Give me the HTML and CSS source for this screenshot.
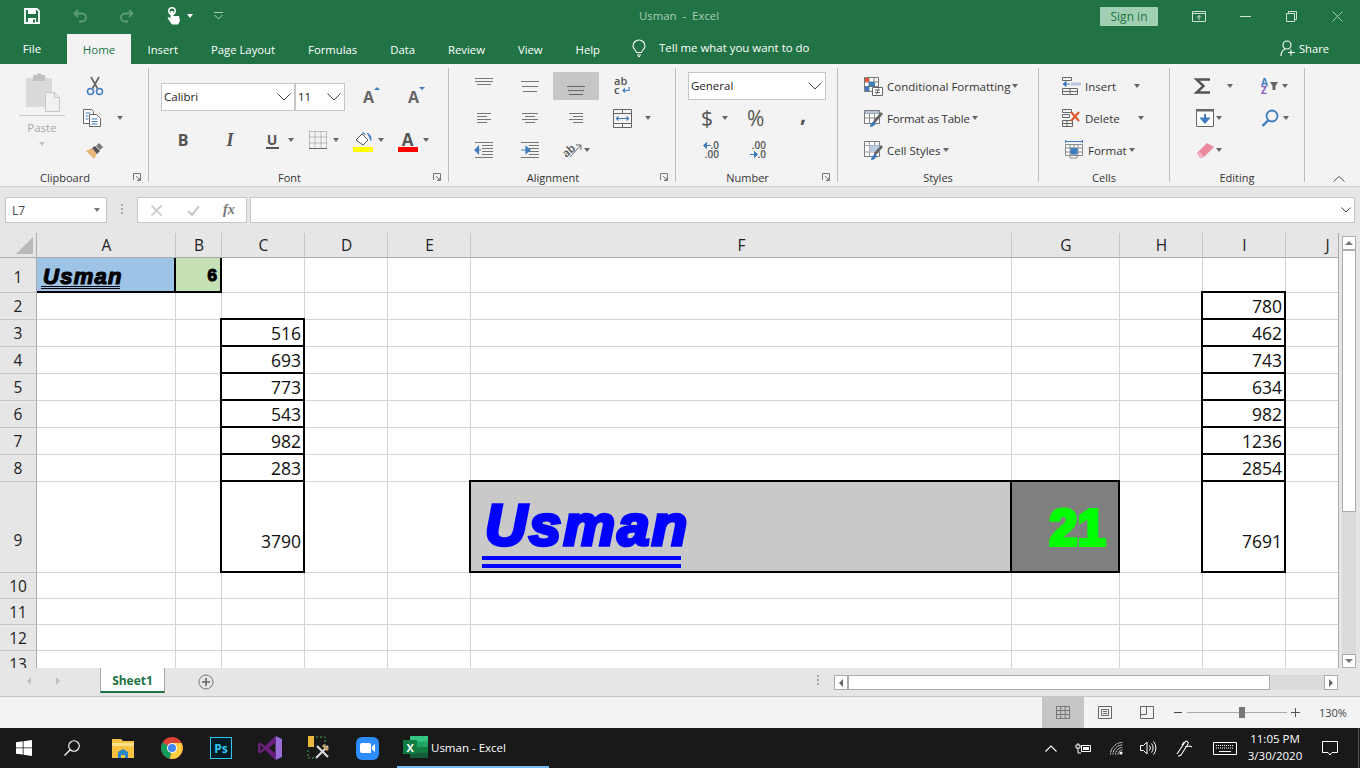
FILE: index.html
```html
<!DOCTYPE html>
<html lang="en">
<head>
<meta charset="utf-8">
<title>Usman - Excel</title>
<link rel="stylesheet" href="styles.css">
</head>
<body>
<div class="app">
  <header class="titlebar">
    <div class="qat">
      <svg class="q-save" width="16" height="16" viewBox="0 0 16 16"><path d="M1 1h12l2 2v12H1z" fill="none" stroke="#fff" stroke-width="1.8"/><path d="M4 1h8v5H4z" fill="#fff"/><path d="M4 10h8v5H4z" fill="#fff"/><path d="M9 11.500h2v3H9z" fill="#217346"/></svg>
      <svg class="q-undo" width="15" height="14" viewBox="0 0 15 14"><path d="M5 1L1.500 4.500 5 8M2 4.500h7a4 4 0 0 1 0 8H6" fill="none" stroke="#5f9b78" stroke-width="1.8"/></svg>
      <svg class="q-redo" width="15" height="14" viewBox="0 0 15 14"><path d="M10 1l3.500 3.500L10 8M13 4.500H6a4 4 0 0 0 0 8h3" fill="none" stroke="#5f9b78" stroke-width="1.800"/></svg>
      <svg class="q-touch" width="16" height="18" viewBox="0 0 16 18"><circle cx="6" cy="4" r="3.200" fill="none" stroke="#fff" stroke-width="1.500"/><path d="M4.500 4h3v5h5.500l1 5-2 3.500H6L1.500 11l1-1 2 1.500z" fill="#fff"/></svg>
      <span class="caret wh q-c1"></span>
      <svg class="q-more" width="9" height="8" viewBox="0 0 9 8"><path d="M0 .5h9" stroke="#a9cdb8"/><path d="M.5 3l4 4 4-4" fill="none" stroke="#a9cdb8"/></svg>
    </div>
    <div class="doc-title">Usman&nbsp; - &nbsp;Excel</div>
    <div class="win">
      <button class="signin">Sign in</button>
      <svg class="w1" width="14" height="11" viewBox="0 0 14 11"><path d="M.5.5h13v10H.5zM.5 2.500h13M7 9V4.500M5 6.500l2-2 2 2" fill="none" stroke="#cfe3d7"/></svg>
      <svg class="w2" width="11" height="1" viewBox="0 0 11 1"><path d="M0 .5h11" stroke="#cfe3d7"/></svg>
      <svg class="w3" width="11" height="11" viewBox="0 0 11 11"><path d="M.5 2.500h8v8h-8zM2.500 2.500v-2h8v8h-2" fill="none" stroke="#cfe3d7"/></svg>
      <svg class="w4" width="11" height="11" viewBox="0 0 11 11"><path d="M.5.5l10 10M10.500.5l-10 10" stroke="#9fc6ae" stroke-width="1"/></svg>
    </div>
  </header>

  <nav class="tabs">
    <a class="tab file">File</a>
    <a class="tab active">Home</a>
    <a class="tab">Insert</a>
    <a class="tab">Page Layout</a>
    <a class="tab">Formulas</a>
    <a class="tab">Data</a>
    <a class="tab">Review</a>
    <a class="tab">View</a>
    <a class="tab">Help</a>
    <svg class="bulb" width="14" height="17" viewBox="0 0 14 17"><path d="M4.500 12.500C4 10 1 9 1 6a6 6 0 0 1 12 0c0 3-3 4-3.500 6.500zM5 15h4M6 16.500h2" fill="none" stroke="#fff" stroke-width="1.100"/></svg>
    <span class="tell">Tell me what you want to do</span>
    <span class="share"><svg width="16" height="17" viewBox="0 0 16 17"><circle cx="7" cy="5" r="4" fill="none" stroke="#fff" stroke-width="1.100"/><path d="M1 16c0-4 2-6 4-7M9 10.500M11 9.500v6M8 12.500h7" fill="none" stroke="#fff" stroke-width="1.100"/></svg>Share</span>
  </nav>

  <section class="ribbon">
    <div class="grp g-clip">
      <div class="body clip-body">
        <div class="paste">
          <svg class="paste-ico" width="36" height="39" viewBox="0 0 36 39"><path d="M1 5h26v29H1z" fill="#dcd9dc"/><path d="M8 2h12v6H8z" fill="#c2bfc2"/><circle cx="14" cy="2.500" r="2.500" fill="#c2bfc2"/><path d="M20.500 19.500h9l5 5v14h-14z" fill="#f3f0f3" stroke="#c8c5c8"/><path d="M29.500 19.500v5h5" fill="none" stroke="#c8c5c8"/></svg>
          <span class="paste-line"></span>
          <span class="paste-txt">Paste</span>
          <span class="caret dis"></span>
        </div>
        <div class="clip-tools">
          <div class="row32"><svg class="ml-cut" width="18" height="20" viewBox="0 0 18 20"><path d="M5 1l6.500 11.500M13 1L6.500 12.500" stroke="#666" stroke-width="1.700" fill="none"/><circle cx="4.500" cy="15.500" r="3" fill="none" stroke="#3f7cbf" stroke-width="1.500"/><circle cx="13.500" cy="15.500" r="3" fill="none" stroke="#3f7cbf" stroke-width="1.500"/></svg></div>
          <div class="row32"><svg class="ml-copy" width="18" height="18" viewBox="0 0 18 18"><path d="M.5.5h8l2 2v12H.5z" fill="#fff" stroke="#666"/><path d="M6.500 5.500h7l4 4v8h-11z" fill="#fff" stroke="#666"/><path d="M2.500 4h5M2.500 7h3M2.500 10h3M8.500 10h6M8.500 12.500h6M8.500 15h6" stroke="#3f7cbf"/></svg><span class="caret ml-c"></span></div>
          <div class="row32"><svg class="ml-paint" width="18" height="17" viewBox="0 0 18 17"><path d="M0 9l6-3 5 6-3 5z" fill="#e8b87a"/><path d="M6 6l5 6 3-3-5-5z" fill="#555"/><path d="M10 4l3-3 4 4-3 3z" fill="#777"/></svg></div>
        </div>
      </div>
      <div class="lbl dlg">Clipboard<svg class="launch" width="8" height="8" viewBox="0 0 8 8"><path d="M.5 7V.5h7V7.500H4M3 3l4 4M4.500 7h2.500V4.500" fill="none" stroke="#777"/></svg></div>
    </div>

    <div class="grp g-font">
      <div class="body font-body">
        <div class="font-row1">
          <div class="sel s-font"><span class="up1">Calibri</span><svg class="chev" width="14" height="8" viewBox="0 0 14 8"><path d="M.5.5l6.500 6.500 6.500-6.500" fill="none" stroke="#444"/></svg></div>
          <div class="sel s-size"><span class="up1">11</span><svg class="chev" width="14" height="8" viewBox="0 0 14 8"><path d="M.5.5l6.500 6.500 6.500-6.500" fill="none" stroke="#444"/></svg></div>
          <span class="grow">A<i class="tri-up"></i></span>
          <span class="grow g2">A<i class="tri-dn"></i></span>
        </div>
        <div class="font-row2">
          <b class="f-b">B</b>
          <i class="f-i">I</i>
          <span class="f-u">U</span><span class="caret c-u"></span>
          <svg class="f-bd" width="18" height="18" viewBox="0 0 18 18"><path d="M.5.5h17v17M.5.5v17M6 .5v17M12 .5v17M.5 6h17M.5 12h17" fill="none" stroke="#888" stroke-dasharray="1 1"/><path d="M0 17.500h18" stroke="#666"/></svg><span class="caret c-bd"></span>
          <span class="swatch s-fill"><svg width="20" height="15" viewBox="0 0 20 15"><path d="M3 8l6-6 6 6-5 5z" fill="#fff" stroke="#555"/><path d="M9 1c0-1 3-1 3 2M14 1c3 1 5 4 4 8-1-2-2-5-4-8z" fill="#3f7cbf" stroke="#3f7cbf" stroke-width=".5"/></svg><i class="bar yellow"></i></span><span class="caret c-fl"></span>
          <span class="swatch s-col"><b class="col-a">A</b><i class="bar red"></i></span><span class="caret c-cl"></span>
        </div>
      </div>
      <div class="lbl dlg">Font<svg class="launch" width="8" height="8" viewBox="0 0 8 8"><path d="M.5 7V.5h7V7.500H4M3 3l4 4M4.500 7h2.500V4.500" fill="none" stroke="#777"/></svg></div>
    </div>

    <div class="grp g-align">
      <div class="body align-body">
        <div class="ac"><svg width="18" height="28" viewBox="0 0 18 28"><path d="M0 6.500h18M0 9.500h18M2 12.500h14" stroke="#777"/></svg></div>
        <div class="ac"><svg width="18" height="28" viewBox="0 0 18 28"><path d="M0 9.500h18M1 14.500h16M2 19.500h14" stroke="#777"/></svg></div>
        <div class="ac on"><svg width="18" height="28" viewBox="0 0 18 28"><path d="M0 14.500h18M1 18.500h16M2 22.500h14" stroke="#666"/></svg></div>
        <div class="ac"><svg width="16" height="18" viewBox="0 0 16 18"><text x="0" y="8" class="svg-t">ab</text><text x="0" y="17" class="svg-t">c</text><path d="M15 10v3.500H9M11 11.500L9 13.500l2 2" fill="none" stroke="#3f7cbf" stroke-width="1.200"/></svg></div>
        <div class="ac-extra"></div>

        <div class="ac"><svg width="14" height="11" viewBox="0 0 14 11"><path d="M0 .5h14M0 3.500h10M0 6.500h14M0 9.500h10" stroke="#777"/></svg></div>
        <div class="ac"><svg width="16" height="11" viewBox="0 0 16 11"><path d="M0 .5h16M3 3.500h10M0 6.500h16M3 9.500h10" stroke="#777"/></svg></div>
        <div class="ac"><svg width="14" height="11" viewBox="0 0 14 11"><path d="M0 .5h14M4 3.500h10M0 6.500h14M4 9.500h10" stroke="#777"/></svg></div>
        <div class="ac"><svg width="19" height="19" viewBox="0 0 19 19"><path d="M.5.5h18v18H.5zM.5 4.500h18M.5 14.500h18M9.500.5v4M9.500 14.500v4" fill="none" stroke="#666"/><path d="M3 9.500h13M5.500 7.500l-2 2 2 2M13.500 7.500l2 2-2 2" fill="none" stroke="#3f7cbf" stroke-width="1.200"/></svg></div>
        <div class="ac-extra"><span class="caret"></span></div>

        <div class="ac"><svg width="18" height="16" viewBox="0 0 18 16"><path d="M0 .5h18M7 3.500h11M7 6.500h11M7 9.500h11M7 12.500h11M0 15.500h18" stroke="#777"/><path d="M6 8H1M3.500 4.500L0 8l3.500 3.500z" fill="#3f7cbf" stroke="#3f7cbf" stroke-width="1.200"/></svg></div>
        <div class="ac"><svg width="18" height="16" viewBox="0 0 18 16"><path d="M0 .5h18M8 3.500h10M8 6.500h10M8 9.500h10M8 12.500h10M0 15.500h18" stroke="#777"/><path d="M0 8h5M5 4.500L9 8l-4 3.500z" fill="#3f7cbf" stroke="#3f7cbf" stroke-width="1.200"/></svg></div>
        <div class="ac orient"><svg width="20" height="17" viewBox="0 0 20 17"><text x="0" y="13" class="svg-t" transform="rotate(-42 6 9)">ab</text><path d="M8 15L19 3M14 3h5v5" fill="none" stroke="#666"/></svg><span class="caret"></span></div>
      </div>
      <div class="lbl dlg">Alignment<svg class="launch" width="8" height="8" viewBox="0 0 8 8"><path d="M.5 7V.5h7V7.500H4M3 3l4 4M4.500 7h2.500V4.500" fill="none" stroke="#777"/></svg></div>
    </div>

    <div class="grp g-num">
      <div class="body num-body">
        <div class="sel s-num"><span class="up1">General</span><svg class="chev" width="14" height="8" viewBox="0 0 14 8"><path d="M.5.5l6.500 6.500 6.500-6.500" fill="none" stroke="#444"/></svg></div>
        <div class="num-row2"><span class="n-d">$</span><span class="caret n-c"></span><span class="n-p">%</span><span class="n-m">,</span></div>
        <div class="num-row3">
          <span class="dec d1"><i class="darr"><svg width="8" height="7" viewBox="0 0 8 7"><path d="M8 3.500H2M3.500 .5l-3 3 3 3z" fill="#3f7cbf" stroke="#3f7cbf"/></svg>.0</i><i>.00</i></span>
          <span class="dec d2"><i>.00</i><i class="darr"><svg width="8" height="7" viewBox="0 0 8 7"><path d="M0 3.500h6M4.500 .5l3 3-3 3z" fill="#3f7cbf" stroke="#3f7cbf"/></svg>.0</i></span>
        </div>
      </div>
      <div class="lbl dlg">Number<svg class="launch" width="8" height="8" viewBox="0 0 8 8"><path d="M.5 7V.5h7V7.500H4M3 3l4 4M4.500 7h2.500V4.500" fill="none" stroke="#777"/></svg></div>
    </div>

    <div class="grp g-styles">
      <div class="body col-body">
        <div class="item"><svg width="19" height="19" viewBox="0 0 19 19"><path d="M.5.5h14v14H.5zM.5 5h14M.5 9.500h14M5 .5v14M10 .5v14" fill="#fff" stroke="#777"/><path d="M1 1h4v4H1z" fill="#e05a3c"/><path d="M5 5h6v4.500H5z" fill="#3f7cbf"/><path d="M1 9.500h4V14H1z" fill="#3f7cbf"/><path d="M8.500 10.500h10v8h-10z" fill="#fff" stroke="#666"/><path d="M11 13h5M11 15.500h5M14.500 11.500l-2 6" stroke="#666" fill="none"/></svg><span>Conditional Formatting</span><span class="caret"></span></div>
        <div class="item"><svg width="19" height="17" viewBox="0 0 19 17"><path d="M.5.5h15v13H.5z" fill="#fff" stroke="#777"/><path d="M.5 3.500h15M.5 8h15M5.500.5v13M10.500.5v13" stroke="#888"/><path d="M1 1h14v2.500H1z" fill="#b9c6dc"/><path d="M8 15l2-5 7-8 2 2-7 8z" fill="#666"/><path d="M6 17c0-3 2-5 4-6l2 2c-1 2-3 4-6 4z" fill="#3f7cbf"/></svg><span class="tight">Format as Table</span><span class="caret"></span></div>
        <div class="item"><svg width="19" height="19" viewBox="0 0 19 19"><path d="M.5.5h15v15H.5z" fill="#fff" stroke="#777"/><path d="M.5 4.500h15M.5 11h15M5.500.5v15M10.500.5v15" stroke="#999"/><path d="M5.500 4.500h10V11h-10z" fill="#b9cce4"/><path d="M9 16l2-5 6-7 2 2-6 7z" fill="#666"/><path d="M7 19c0-3 2-5 4-6l2 2c-1 2-3 4-6 4z" fill="#3f7cbf"/></svg><span>Cell Styles</span><span class="caret"></span></div>
      </div>
      <div class="lbl">Styles</div>
    </div>

    <div class="grp g-cells">
      <div class="body col-body">
        <div class="item"><svg width="19" height="18" viewBox="0 0 19 18"><path d="M.5.5h9v3h-9zM.5 11.500h15v6H.5zM8 11.500v6M.5 14.500h15" fill="none" stroke="#666"/><path d="M9 7h10" stroke="#b9c6dc" stroke-width="3"/><path d="M8 7H2M4 4.500L1 7l3 2.500z" fill="#3f7cbf" stroke="#3f7cbf"/></svg><span>Insert</span><span class="caret mi"></span></div>
        <div class="item"><svg width="19" height="18" viewBox="0 0 19 18"><path d="M.5.5h9v3h-9zM.5 5.500h7v3h-7zM.5 11.500h10v6H.5zM5 11.500v6M.5 14.500h10" fill="none" stroke="#666"/><path d="M9 3l8 9M17 3l-8 9" stroke="#e0532b" stroke-width="2"/></svg><span>Delete</span><span class="caret md"></span></div>
        <div class="item fmt"><svg width="19" height="20" viewBox="0 0 19 20"><path d="M.5 1.500h17M.5 0v3M17.500 0v3" stroke="#3f7cbf" fill="none"/><path d="M.5 4.500h17v11H.5zM.5 8h17M.5 12h17M5 4.500V18H12V15.500M9 4.500v11M13 4.500v11" fill="#fff" stroke="#888"/><path d="M5.500 8h7v6.500h-7z" fill="#3f7cbf"/></svg><span>Format</span><span class="caret"></span></div>
      </div>
      <div class="lbl">Cells</div>
    </div>

    <div class="grp g-edit">
      <div class="body edit-body">
        <div class="e1"><svg width="17" height="18" viewBox="0 0 17 18"><path d="M16 2.500H2.500L9.500 9l-7 6.500H16" fill="none" stroke="#555" stroke-width="2.400"/></svg><span class="caret"></span></div>
        <div class="e2"><svg width="8" height="17" viewBox="0 0 8 17"><text x="0" y="8" class="az a">A</text><text x="0" y="16" class="az z">Z</text></svg><svg class="fun" width="8" height="10" viewBox="0 0 8 10"><path d="M0 1h8L5.500 5v4h-3V5z" fill="#666"/></svg><span class="caret"></span></div>
        <div class="e1 e-fill"><svg width="18" height="18" viewBox="0 0 18 18"><path d="M.5.5h17v17H.5z" fill="#fff" stroke="#666"/><path d="M0 0h18v2.500H0z" fill="#666"/><path d="M9 5v8M5.500 9.500L9 13.500l3.500-4z" fill="#3f7cbf" stroke="#3f7cbf" stroke-width="2"/></svg><span class="caret"></span></div>
        <div class="e2"><svg width="18" height="18" viewBox="0 0 18 18"><circle cx="11" cy="7" r="5.500" fill="none" stroke="#3f7cbf" stroke-width="1.800"/><path d="M7 11.500l-5.500 5.500" stroke="#3f7cbf" stroke-width="2.400"/></svg><span class="caret"></span></div>
        <div class="e1 e-era"><svg width="17" height="15" viewBox="0 0 17 15"><path d="M0 10L10 0l7 4-10 10-4 1z" fill="#ea8a9e"/><path d="M0 10l4 5 3-1-4-5z" fill="#f3b4c1"/></svg><span class="caret"></span></div>
      </div>
      <div class="lbl">Editing</div>
    </div>
    <div class="collapse"><svg width="12" height="6" viewBox="0 0 12 6"><path d="M.5 5.500L6 .5l5.500 5" fill="none" stroke="#555"/></svg></div>
  </section>

  <section class="fbar">
    <div class="namebox">L7<span class="caret"></span></div>
    <span class="grip"></span>
    <div class="fbtns">
      <svg width="11" height="11" viewBox="0 0 11 11"><path d="M.5.5l10 10M10.500.5l-10 10" stroke="#c4c4c4" stroke-width="1.600"/></svg>
      <svg width="13" height="11" viewBox="0 0 13 11"><path d="M1 6l4 4 7-9" fill="none" stroke="#c4c4c4" stroke-width="2"/></svg>
      <i class="fx">fx</i>
    </div>
    <div class="finput"><svg width="10" height="6" viewBox="0 0 10 6"><path d="M.5.5L5 5 9.500.5" fill="none" stroke="#444"/></svg></div>
  </section>

  <section class="sheet">
    <div class="grid">
      <div class="corner"><span></span></div>
      <div class="ch">A</div><div class="ch">B</div><div class="ch">C</div><div class="ch">D</div><div class="ch">E</div><div class="ch">F</div><div class="ch">G</div><div class="ch">H</div><div class="ch">I</div><div class="ch">J</div>

      <div class="rh r1">1</div>
      <div class="c box blue"><span class="fancy-s">Usman</span></div>
      <div class="c box green"><span class="six">6</span></div>
      <div class="c"></div><div class="c"></div><div class="c"></div><div class="c"></div><div class="c"></div><div class="c"></div><div class="c"></div><div class="c"></div>

      <div class="rh">2</div>
      <div class="c"></div><div class="c"></div><div class="c"></div><div class="c"></div><div class="c"></div><div class="c"></div><div class="c"></div><div class="c"></div><div class="c box n">780</div><div class="c"></div>

      <div class="rh">3</div>
      <div class="c"></div><div class="c"></div><div class="c box n">516</div><div class="c"></div><div class="c"></div><div class="c"></div><div class="c"></div><div class="c"></div><div class="c box n">462</div><div class="c"></div>

      <div class="rh">4</div>
      <div class="c"></div><div class="c"></div><div class="c box n">693</div><div class="c"></div><div class="c"></div><div class="c"></div><div class="c"></div><div class="c"></div><div class="c box n">743</div><div class="c"></div>

      <div class="rh">5</div>
      <div class="c"></div><div class="c"></div><div class="c box n">773</div><div class="c"></div><div class="c"></div><div class="c"></div><div class="c"></div><div class="c"></div><div class="c box n">634</div><div class="c"></div>

      <div class="rh">6</div>
      <div class="c"></div><div class="c"></div><div class="c box n">543</div><div class="c"></div><div class="c"></div><div class="c"></div><div class="c"></div><div class="c"></div><div class="c box n">982</div><div class="c"></div>

      <div class="rh">7</div>
      <div class="c"></div><div class="c"></div><div class="c box n">982</div><div class="c"></div><div class="c"></div><div class="c"></div><div class="c"></div><div class="c"></div><div class="c box n">1236</div><div class="c"></div>

      <div class="rh">8</div>
      <div class="c"></div><div class="c"></div><div class="c box n">283</div><div class="c"></div><div class="c"></div><div class="c"></div><div class="c"></div><div class="c"></div><div class="c box n">2854</div><div class="c"></div>

      <div class="rh r9">9</div>
      <div class="c"></div><div class="c"></div><div class="c box n tall">3790</div><div class="c"></div><div class="c"></div>
      <div class="c box gray1"><span class="fancy-l">Usman</span><span class="dbl"></span></div>
      <div class="c box gray2"><span class="big21">21</span></div>
      <div class="c"></div><div class="c box n tall">7691</div><div class="c"></div>

      <div class="rh">10</div>
      <div class="c"></div><div class="c"></div><div class="c"></div><div class="c"></div><div class="c"></div><div class="c"></div><div class="c"></div><div class="c"></div><div class="c"></div><div class="c"></div>
      <div class="rh">11</div>
      <div class="c"></div><div class="c"></div><div class="c"></div><div class="c"></div><div class="c"></div><div class="c"></div><div class="c"></div><div class="c"></div><div class="c"></div><div class="c"></div>
      <div class="rh">12</div>
      <div class="c"></div><div class="c"></div><div class="c"></div><div class="c"></div><div class="c"></div><div class="c"></div><div class="c"></div><div class="c"></div><div class="c"></div><div class="c"></div>
      <div class="rh">13</div>
      <div class="c"></div><div class="c"></div><div class="c"></div><div class="c"></div><div class="c"></div><div class="c"></div><div class="c"></div><div class="c"></div><div class="c"></div><div class="c"></div>
    </div>
    <div class="vscroll">
      <div class="sb-btn"><i class="ar up"></i></div>
      <div class="v-thumb"></div>
      <div class="v-track"></div>
      <div class="sb-btn"><i class="ar down"></i></div>
    </div>
  </section>

  <section class="tabbar">
    <i class="nav-l"></i><i class="nav-r"></i>
    <div class="sheet-tab">Sheet1</div>
    <svg class="add" width="16" height="16" viewBox="0 0 16 16"><circle cx="8" cy="8" r="7" fill="none" stroke="#777"/><path d="M8 4v8M4 8h8" stroke="#666" stroke-width="1.600"/></svg>
    <span class="grip hgrip"></span>
    <div class="hscroll">
      <div class="sb-btn"><i class="ar left"></i></div>
      <div class="h-thumb"></div>
      <div class="h-track"></div>
      <div class="sb-btn"><i class="ar right"></i></div>
    </div>
  </section>

  <footer class="status">
    <div class="view on"><svg width="14" height="13" viewBox="0 0 14 13"><path d="M.5.5h13v12H.5zM.5 4.500h13M.5 8.500h13M4.800.5v12M9.200.5v12" fill="none" stroke="#777"/></svg></div>
    <div class="view"><svg width="14" height="13" viewBox="0 0 14 13"><path d="M.5.5h13v12H.5z" fill="none" stroke="#666"/><path d="M3.500 3.500h7v6h-7zM5 5.500h4M5 7.500h4" fill="none" stroke="#666"/></svg></div>
    <div class="view"><svg width="14" height="13" viewBox="0 0 14 13"><path d="M.5.5h13v12H.5zM.5 8.500h6V.5" fill="none" stroke="#666"/></svg></div>
    <span class="zm minus"></span>
    <div class="slider"><i></i></div>
    <svg class="plus" width="9" height="9" viewBox="0 0 9 9"><path d="M4.500 0v9M0 4.500h9" stroke="#555"/></svg>
    <span class="pct">130%</span>
  </footer>

  <footer class="taskbar">
    <svg class="t-win" width="16" height="16" viewBox="0 0 16 16"><path d="M0 2.300l6.700-1v6.200H0zM7.500 1.200L16 0v7.500H7.500zM0 8.300h6.700v6.300L0 13.700zM7.500 8.300H16V16l-8.500-1.200z" fill="#fff"/></svg>
    <svg class="t-sea" width="16" height="16" viewBox="0 0 16 16"><circle cx="10" cy="6" r="5.300" fill="none" stroke="#fff" stroke-width="1.100"/><path d="M6 10l-5.500 5.500" stroke="#fff" stroke-width="1.200"/></svg>
    <svg class="t-exp" width="22" height="19" viewBox="0 0 22 19"><path d="M0 0h9l2 2h11v17H0z" fill="#f5c242"/><path d="M0 4h22v3H0z" fill="#fbe08a"/><path d="M6 19v-6l5-3 5 3v6h-3v-3H9v3z" fill="#2a83c8"/></svg>
    <svg class="t-chr" width="22" height="22" viewBox="0 0 22 22"><circle cx="11" cy="11" r="11" fill="#db4437"/><path d="M11 11L1.500 5.500A11 11 0 0 0 9 21.800z" fill="#0f9d58"/><path d="M11 6h9.500A11 11 0 0 1 9 21.800L11 11z" fill="#ffcd40"/><circle cx="11" cy="11" r="5" fill="#fff"/><circle cx="11" cy="11" r="4" fill="#4285f4"/></svg>
    <div class="t-ps"><span>Ps</span></div>
    <svg class="t-vs" width="24" height="24" viewBox="0 0 24 24"><path d="M17.500 0L24 3v18l-6.500 3z" fill="#9a6ddb"/><path d="M17.500 0L7 10 2.500 6.500 0 8v8l2.500 1.500L7 14l10.500 10 0-6.500L11 12l6.500-5.500z" fill="#68217a"/><path d="M2.500 9v6L5.500 12z" fill="#1a1a1a"/></svg>
    <svg class="t-tool" width="24" height="24" viewBox="0 0 24 24"><path d="M1 0h6v11H1z" fill="#e8b93c"/><path d="M9 1h9v9M1 14v8h8" fill="none" stroke="#3cb34a" stroke-dasharray="2 2"/><path d="M9 22L21 10M10 10l11 11" stroke="#d9d9d9" stroke-width="2.200"/><path d="M17 8l5 5-2 2-5-5z" fill="#c8a36a"/></svg>
    <div class="t-zoom"><svg width="15" height="10" viewBox="0 0 15 10"><path d="M0 2a2 2 0 0 1 2-2h7a2 2 0 0 1 2 2v8H2a2 2 0 0 1-2-2z" fill="#fff"/><path d="M12 3.500L15 1v8l-3-2.500z" fill="#fff"/></svg></div>
    <div class="t-app">
      <svg width="25" height="22" viewBox="0 0 25 22"><path d="M7 0h18v22H7z" fill="#21a366"/><path d="M7 0h18v5.500H7z" fill="#33c481"/><path d="M7 11h18v5.500H7z" fill="#107c41"/><path d="M7 16.500h18V22H7z" fill="#185c37"/><path d="M0 4h14v14H0z" fill="#107c41"/><text x="3.500" y="15.500" class="xl">X</text></svg>
      <span>Usman - Excel</span>
    </div>
    <svg class="tr-up" width="12" height="7" viewBox="0 0 12 7"><path d="M.5 6.500L6 1l5.500 5.500" fill="none" stroke="#fff" stroke-width="1.100"/></svg>
    <svg class="tr-bat" width="16" height="11" viewBox="0 0 16 11"><path d="M3 0v2M1 2h4v3H1zM3 5v5h3" fill="none" stroke="#fff"/><path d="M6.500 2.500h9v6h-9z" fill="none" stroke="#fff"/><path d="M8 4h6v3H8z" fill="#fff"/></svg>
    <svg class="tr-wifi" width="13" height="13" viewBox="0 0 13 13"><path d="M.5 12.500a12 12 0 0 1 12-12M3 12.500a9.500 9.500 0 0 1 9.500-9.500M5.500 12.500a7 7 0 0 1 7-7M8 12.500a4.500 4.500 0 0 1 4.500-4.500" fill="none" stroke="#ddd" stroke-dasharray="2 .5"/><circle cx="11" cy="11" r="1.600" fill="#fff"/></svg>
    <svg class="tr-vol" width="16" height="14" viewBox="0 0 16 14"><path d="M.5 4.500h3l3.500-3.500v12L3.500 9.500h-3z" fill="none" stroke="#fff"/><path d="M9.500 4.500a4 4 0 0 1 0 5M11.500 2.500a7 7 0 0 1 0 9M13.500.5a10 10 0 0 1 0 13" fill="none" stroke="#fff"/></svg>
    <svg class="tr-pen" width="17" height="18" viewBox="0 0 17 18"><path d="M1 15l8-12c1-2 4 0 3 2L5 16c-1 1-3 1-3 1M9 8l5-1 2 1M8 3l-2 3" fill="none" stroke="#fff" stroke-width="1.100"/></svg>
    <svg class="tr-key" width="24" height="13" viewBox="0 0 24 13"><path d="M.5.500h23v12H.5z" fill="none" stroke="#fff"/><path d="M3 3.500h18M3 6h18" stroke="#fff" stroke-dasharray="1 1"/><path d="M6 9.500h12" stroke="#fff"/></svg>
    <div class="clock"><span>11:05 PM</span><span>3/30/2020</span></div>
    <svg class="tr-note" width="16" height="15" viewBox="0 0 16 15"><path d="M.5.5h15v11H10l-2 2.500-2-2.500H.5z" fill="none" stroke="#fff"/></svg>
    <span class="showdesk"></span>
  </footer>
</div>
</body>
</html>
```

FILE: styles.css
```css
* { box-sizing: border-box; }
html, body { margin: 0; padding: 0; }
body { width: 1360px; height: 768px; overflow: hidden; font-family: "Open Sans", "Noto Sans", sans-serif; color: #333; background: #f3f3f3; }
i { font-style: normal; }
svg { display: block; flex: none; overflow: visible; }
.app { display: flex; flex-direction: column; width: 1360px; height: 768px; }

/* title bar */
.titlebar { display: flex; align-items: center; height: 32px; background: #217346; position: relative; flex: none; }
.qat { display: flex; align-items: center; width: 600px; }
.q-save { margin-left: 24px; }
.q-undo { margin-left: 33px; }
.q-redo { margin-left: 31px; }
.q-touch { margin-left: 32px; }
.caret { display: inline-block; flex: none; width: 0; height: 0; border-left: 3.500px solid transparent; border-right: 3.500px solid transparent; border-top: 4px solid #666; }
.caret.wh { border-top-color: #fff; }
.caret.dis { border-top-color: #c2c2c2; }
.q-c1 { margin-left: 5px; }
.q-more { margin-left: 21px; }
.doc-title { width: 160px; margin-left: 39px; padding-bottom: 1px; font-size: 11.400px; color: #a9cdb8; }
.win { display: flex; align-items: center; margin-left: 301px; }
.signin { width: 58px; height: 19px; margin: 0; padding: 0; border: 0; border-radius: 1px; background: #a0cfb3; color: #217346; font: 12px "Open Sans", sans-serif; }
.w1 { margin-left: 34px; }
.w2 { margin-left: 34px; }
.w3 { margin-left: 35px; }
.w4 { margin-left: 35px; }

/* tabs */
.tabs { display: flex; align-items: flex-end; height: 32px; background: #217346; flex: none; }
.tab { display: flex; align-items: center; justify-content: center; height: 30px; padding: 0 16.500px; font-size: 11.300px; color: #fff; white-space: nowrap; }
.tab.file { width: 67px; padding: 0 3px 2px 0; font-size: 11.600px; }
.tab.active { width: 64px; background: #f3f3f3; color: #217346; padding: 0; font-size: 11.500px; }
.bulb { margin: 0 0 7px 15.500px; }
.tell { height: 30px; margin-left: 13px; font-size: 11.450px; line-height: 28px; color: #fff; }
.share { display: flex; align-items: center; gap: 3px; height: 30px; margin-left: auto; padding: 0 31px 2px 0; font-size: 11.200px; color: #fff; }

/* ribbon */
.ribbon { display: flex; height: 123px; padding: 4px 0 4px; background: #f3f3f3; border-bottom: 1px solid #d0d0d0; flex: none; }
.grp { display: flex; flex-direction: column; height: 114px; border-right: 1px solid #bdbdbd; flex: none; }
.g-clip { width: 149px; }
.g-font { width: 300px; }
.g-align { width: 227px; }
.g-num { width: 162px; }
.g-styles { width: 201px; }
.g-cells { width: 131px; }
.g-edit { width: 135px; }
.body { height: 103px; flex: none; }
.lbl { position: relative; height: 11px; font-size: 11px; line-height: 13px; text-align: center; color: #333; }
.lbl.dlg { padding-right: 18px; }
.launch { position: absolute; right: 7px; top: 2px; }
.collapse { display: flex; align-items: flex-end; margin-left: 28px; height: 114px; }

.clip-body { display: flex; }
.paste { display: flex; flex-direction: column; align-items: center; width: 46px; margin-left: 19px; }
.paste-ico { margin: 5px 0 0 2px; }
.paste-line { width: 46px; height: 1px; margin-top: 3px; background: #c8c8c8; }
.paste-txt { margin-top: 4px; font-size: 11.500px; color: #a8a8a8; line-height: 16px; }
.paste .caret { margin-top: 6px; }
.clip-tools { display: flex; flex-direction: column; margin-top: 2px; }
.row32 { display: flex; align-items: center; height: 32px; }
.ml-cut { margin-left: 21px; }
.ml-copy { margin-left: 18px; }
.ml-c { margin-left: 16px; }
.ml-paint { margin-left: 21px; }

.font-body { padding: 15px 0 0 12px; }
.font-row1 { display: flex; align-items: center; height: 28px; }
.sel { display: flex; align-items: center; justify-content: space-between; height: 28px; background: #fff; border: 1px solid #c6c6c6; font-size: 11.500px; color: #222; padding: 0 3px 0 2px; }
.up1 { margin-bottom: 2px; }
.s-font { width: 134px; }
.s-size { width: 50px; }
.grow { position: relative; width: 14px; margin-left: 18px; font-size: 16px; font-weight: 700; line-height: 20px; color: #666; }
.grow.g2 { margin-left: 31px; }
.tri-up, .tri-dn { position: absolute; right: -3px; top: 0; width: 0; height: 0; border-left: 3px solid transparent; border-right: 3px solid transparent; }
.tri-up { border-bottom: 3px solid #3f7cbf; }
.tri-dn { border-top: 3px solid #3f7cbf; }
.font-row2 { display: flex; align-items: center; height: 32px; margin-top: 13px; }
.f-b { width: 12px; margin-left: 16px; font-size: 16px; color: #555; text-align: center; }
.f-i { width: 10px; margin-left: 36px; font: italic 700 18px "Liberation Serif", serif; color: #555; text-align: center; }
.f-u { width: 13px; margin-left: 30.500px; font-size: 14px; font-weight: 700; line-height: 15px; color: #555; border-bottom: 2px solid #555; text-align: center; }
.c-u { margin-left: 9.500px; }
.f-bd { margin-left: 14.500px; }
.c-bd { margin-left: 6.500px; }
.swatch { display: flex; flex-direction: column; align-items: center; width: 20px; margin-top: 4px; }
.s-fill { margin-left: 13.500px; }
.s-col { margin-left: 13.500px; }
.bar { display: block; width: 20px; height: 5px; }
.yellow { background: #ffff00; }
.red { background: #f00; }
.col-a { height: 15px; font-size: 17px; line-height: 15px; color: #555; }
.c-fl, .c-cl { margin-left: 5.500px; }

.align-body { display: grid; grid-template-columns: 46px 46px 46px 46px 24px; grid-auto-rows: 32px; padding: 2px 0 0 12px; }
.ac { display: flex; align-items: center; justify-content: center; height: 32px; }
.ac.on { height: 28px; margin-top: 2px; background: #c6c6c6; }
.ac-extra { display: flex; align-items: center; }
.svg-t { font: 600 11px "Open Sans", sans-serif; fill: #555; }
.orient { gap: 2px; }

.num-body { padding: 4px 0 0 12px; }
.s-num { width: 138px; height: 28px; }
.num-row2 { display: flex; align-items: center; height: 32px; margin-top: 2px; }
.n-d { width: 14px; margin-left: 13px; font-size: 21px; color: #555; }
.n-c { margin-left: 7px; }
.n-p { width: 18px; margin-left: 19px; font-size: 21px; color: #555; }
.n-m { margin-left: 35px; font-size: 22px; font-weight: 700; line-height: 22px; padding-bottom: 10px; color: #555; }
.num-row3 { display: flex; height: 32px; }
.dec { display: flex; flex-direction: column; justify-content: center; align-items: flex-end; font-size: 10px; line-height: 9px; font-weight: 600; color: #555; width: 18px; }
.d1 { margin-left: 13px; }
.d2 { margin-left: 29px; }
.darr { display: flex; align-items: center; }

.col-body { display: flex; flex-direction: column; padding-top: 2px; }
.item { display: flex; align-items: center; height: 32px; font-size: 11.500px; color: #333; white-space: nowrap; }
.tight { letter-spacing: -.2px; }
.g-styles .item { padding-left: 26px; }
.g-cells .item { padding-left: 23px; }
.item svg { margin-right: 4px; }
.item .caret { margin-left: 2px; }
.item .caret.mi { margin-left: 18px; }
.item .caret.md { margin-left: 18px; }
.g-cells .item.fmt { padding-left: 26px; }

.edit-body { display: grid; grid-template-columns: 88px 46px; grid-auto-rows: 32px; padding-top: 2px; }
.e1 { display: flex; align-items: center; padding-left: 24px; gap: 16px; }
.e-fill { padding-left: 26px; gap: 2px; }
.e-era { padding-left: 27px; gap: 2px; }
.e2 { display: flex; align-items: center; padding-left: 3px; gap: 2px; }
.e2 .caret { margin-left: 2px; }
.az { font: 700 10px "Open Sans", sans-serif; }
.az.a { fill: #3f7cbf; }
.az.z { fill: #8a5cc0; }
.fun { margin-left: -1px; }

/* formula bar */
.fbar { display: flex; align-items: center; height: 46px; padding: 10px 5px; background: #e6e6e6; flex: none; }
.namebox { display: flex; align-items: center; justify-content: space-between; width: 102px; height: 26px; padding: 0 6px; background: #fff; border: 1px solid #c6c6c6; font-size: 12px; color: #444; }
.namebox .caret { border-top-color: #777; }
.grip { width: 2px; height: 12px; margin-left: 14px; background-image: linear-gradient(#aaa 50%, transparent 50%); background-size: 2px 4px; }
.fbtns { display: flex; align-items: center; gap: 25px; width: 110px; height: 26px; margin-left: 14px; padding-left: 13px; background: #fff; border: 1px solid #c6c6c6; }
.fx { font: italic 700 14px "Liberation Serif", serif; color: #777; margin-left: -2px; }
.finput { display: flex; align-items: center; justify-content: flex-end; width: 1105px; height: 26px; margin-left: 3px; padding-right: 3px; background: #fff; border: 1px solid #c6c6c6; }

/* sheet */
.sheet { display: flex; height: 435px; background: #e6e6e6; flex: none; }
.grid { display: grid; grid-template-columns: 37px 139px 46px 83px 83px 83px 541px 108px 83px 83px 83px; grid-template-rows: 25px 35px 27px 27px 27px 27px 27px 27px 27px 91px 26px 26px 26px 26px; width: 1339px; height: 435px; overflow: hidden; background: #fff; border-right: 1px solid #ababab; flex: none; }
.corner { display: flex; justify-content: flex-end; align-items: flex-end; padding: 0 3px 3px 0; background: #e6e6e6; border-right: 1px solid #ababab; border-bottom: 1px solid #ababab; position: relative; z-index: 3; }
.corner span { width: 0; height: 0; border-left: 17px solid transparent; border-bottom: 17px solid #b9b9b9; }
.ch { display: flex; align-items: center; justify-content: center; padding-left: 1px; background: #e6e6e6; border-right: 1px solid #c6c6c6; border-bottom: 1px solid #ababab; font-size: 15.500px; color: #222; position: relative; z-index: 3; }
.rh { display: flex; align-items: center; justify-content: center; background: #e6e6e6; border-right: 1px solid #ababab; border-bottom: 1px solid #c6c6c6; font-size: 15.500px; color: #222; position: relative; z-index: 3; }
.rh.r1 { padding-top: 3px; }
.rh.r9 { padding-top: 26px; }
.c { position: relative; background: #fff; border-right: 1px solid #d4d4d4; border-bottom: 1px solid #d4d4d4; min-width: 0; }
.box::after { content: ""; position: absolute; left: -2px; top: -2px; right: -1px; bottom: -1px; border: 2px solid #000; z-index: 2; pointer-events: none; }
.n { display: flex; align-items: center; justify-content: flex-end; padding-right: 3px; font-size: 17.500px; color: #111; }
.n.tall { align-items: flex-end; padding-bottom: 19px; }
.blue { background: #9dc3e6; display: flex; }
.green { background: #c5e0b4; display: flex; align-items: center; justify-content: flex-end; padding: 2px 4px 0 0; }
.fancy-s { display: block; height: 28px; margin: 3px 0 0 4px; width: 79px; padding-left: 2px; font: italic 700 22px/32px "Liberation Sans", sans-serif; color: #000; -webkit-text-stroke: 1.200px #000; letter-spacing: 1.300px; border-bottom: 3px double #000; white-space: nowrap; }
.six { font: 700 17px "Liberation Sans", sans-serif; color: #000; -webkit-text-stroke: 1.200px #000; }
.gray1 { display: flex; flex-direction: column; justify-content: flex-end; padding: 0 0 4px 11px; background: #c9c9c9; }
.fancy-l { display: block; height: 54px; padding-left: 3px; font: italic 700 58px/45px "Liberation Sans", sans-serif; color: #00f; -webkit-text-stroke: 3.500px #00f; letter-spacing: 2.200px; white-space: nowrap; }
.dbl { display: block; width: 199px; height: 12px; border-bottom: 12px double #00f; }
.gray2 { display: flex; align-items: flex-end; justify-content: flex-end; padding: 0 13px 20px 0; background: #7f7f7f; }
.big21 { font: 700 50px/48px "Liberation Sans", sans-serif; color: #0f0; -webkit-text-stroke: 4px #0f0; letter-spacing: .5px; }

.vscroll { display: flex; flex-direction: column; width: 14px; margin-left: 3px; padding-top: 3px; }
.sb-btn { display: flex; align-items: center; justify-content: center; width: 14px; height: 14px; background: #fff; border: 1px solid #ababab; flex: none; }
.v-thumb { height: 262px; background: #fff; border: 1px solid #ababab; flex: none; }
.v-track { flex: 1; background: #dbdbdb; }
.ar { display: block; width: 0; height: 0; }
.ar.up { border-left: 4px solid transparent; border-right: 4px solid transparent; border-bottom: 4px solid #777; }
.ar.down { border-left: 4px solid transparent; border-right: 4px solid transparent; border-top: 4px solid #777; }
.ar.left { border-top: 4px solid transparent; border-bottom: 4px solid transparent; border-right: 4px solid #666; }
.ar.right { border-top: 4px solid transparent; border-bottom: 4px solid transparent; border-left: 4px solid #666; }

/* sheet tabs */
.tabbar { display: flex; align-items: flex-start; height: 29px; background: #e6e6e6; border-bottom: 1px solid #c6c6c6; flex: none; }
.nav-l, .nav-r { width: 0; height: 0; margin-top: 9px; border-top: 4px solid transparent; border-bottom: 4px solid transparent; }
.nav-l { margin-left: 27px; border-right: 4px solid #c0c0c0; }
.nav-r { margin-left: 25px; border-left: 4px solid #c0c0c0; }
.sheet-tab { display: flex; align-items: center; justify-content: center; width: 65px; height: 25px; margin-left: 40px; padding-top: 1px; background: #fff; border-left: 1px solid #ababab; border-right: 1px solid #ababab; border-bottom: 2px solid #217346; font-size: 12px; font-weight: 700; color: #217346; }
.add { margin: 6px 0 0 33px; }
.hgrip { margin: 7px 0 0 603px; }
.hscroll { display: flex; width: 504px; height: 15px; margin: 7px 0 0 15px; }
.hscroll .sb-btn { height: 15px; }
.h-thumb { width: 422px; height: 15px; background: #fff; border: 1px solid #ababab; flex: none; }
.h-track { flex: 1; background: #dbdbdb; }

/* status */
.status { display: flex; align-items: center; height: 31px; padding-left: 1042px; background: #f3f3f3; flex: none; }
.view { display: flex; align-items: center; justify-content: center; width: 42px; height: 31px; }
.view.on { background: #c6c6c6; }
.zm.minus { width: 8px; height: 1px; margin-left: 6px; background: #444; }
.slider { position: relative; width: 100px; height: 1px; margin-left: 5px; background: #aaa; }
.slider i { position: absolute; left: 52px; top: -5px; width: 6px; height: 11px; background: #777; }
.plus { margin-left: 4px; }
.pct { margin-left: 19px; font-size: 11px; color: #444; }

/* taskbar */
.taskbar { display: flex; align-items: center; height: 40px; background: #191919; flex: none; color: #fff; }
.t-win { margin-left: 16px; }
.t-sea { margin-left: 32px; }
.t-exp { margin-left: 32px; }
.t-chr { margin-left: 27px; }
.t-ps { display: flex; align-items: center; justify-content: center; width: 22px; height: 22px; margin-left: 27px; background: #001d26; border: 1.500px solid #31c5f0; font-size: 12px; font-weight: 700; color: #31c5f0; }
.t-vs { margin-left: 26px; }
.t-tool { margin-left: 25px; }
.t-zoom { display: flex; align-items: center; justify-content: center; width: 23px; height: 23px; margin-left: 25px; background: #2d8cff; border-radius: 6px; }
.t-app { display: flex; align-items: center; gap: 3px; width: 152px; height: 40px; margin-left: 18px; padding-left: 6px; border-bottom: 2px solid #76b9ed; font-size: 11.500px; }
.xl { font: 700 11px "Open Sans", sans-serif; fill: #fff; }
.tr-up { margin-left: 496px; }
.tr-bat { margin-left: 18px; }
.tr-wifi { margin-left: 19px; }
.tr-vol { margin-left: 17px; }
.tr-pen { margin-left: 20px; }
.tr-key { margin-left: 20px; }
.clock { display: flex; flex-direction: column; align-items: center; width: 68px; margin-left: 4px; padding-bottom: 2px; font-size: 11.500px; line-height: 17px; }
.tr-note { margin-left: 13px; }
.showdesk { width: 1px; height: 40px; margin-left: 20px; background: #555; }
```
